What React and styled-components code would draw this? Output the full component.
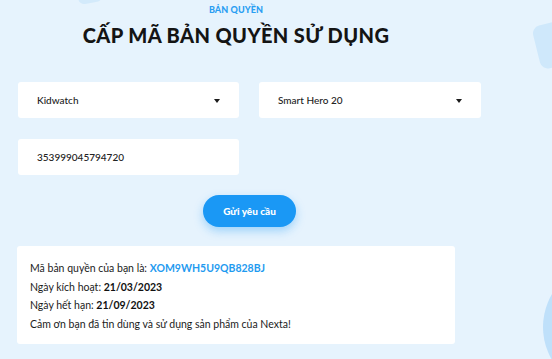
import React from "react";
import styled, { createGlobalStyle } from "styled-components";

const Global = createGlobalStyle`
  html, body { margin: 0; padding: 0; }
  body {
    background: #e6f3fd;
    font-family: "Lato", "Noto Sans", sans-serif;
    color: #1b1b1b;
    overflow: hidden;
  }
`;

const Page = styled.div`
  position: relative;
  width: 552px;
  height: 359px;
  overflow: hidden;
  background: #e6f3fd;
`;

const ShapeTopRight = styled.div`
  position: absolute;
  left: 536px;
  top: 22px;
  width: 40px;
  height: 44px;
  border-radius: 8px;
  background: #cfe8fb;
  transform: rotate(-14deg);
`;

const ShapeCircle = styled.div`
  position: absolute;
  left: 543px;
  top: 262px;
  width: 130px;
  height: 130px;
  border-radius: 50%;
  background: #bfe0fa;
`;

const ShapeTopLeft = styled.div`
  position: absolute;
  left: 78px;
  top: -10px;
  width: 24px;
  height: 13px;
  border-radius: 6px;
  background: #d3eafb;
  transform: rotate(-10deg);
`;

const Content = styled.div`
  position: relative;
  display: flex;
  flex-direction: column;
  padding-top: 4px;
`;

const Header = styled.header`
  width: 438px;
  margin-left: 17px;
  display: flex;
  flex-direction: column;
  align-items: center;
`;

const Eyebrow = styled.div`
  font-family: "Lato", sans-serif;
  font-weight: 900;
  font-size: 9px;
  letter-spacing: 0.1px;
  color: #2a9ef2;
  line-height: 11px;
`;

const Title = styled.h1`
  margin: 8px 0 0;
  font-family: "Lato", sans-serif;
  font-weight: 900;
  font-size: 20px;
  line-height: 24px;
  letter-spacing: 0.4px;
  color: #141414;
`;

const Form = styled.div`
  margin: 35px 0 0 18px;
  display: grid;
  grid-template-columns: 221px 222px;
  column-gap: 20px;
  row-gap: 21px;
`;

const Field = styled.div`
  height: 36px;
  background: #ffffff;
  border-radius: 3px;
  display: flex;
  align-items: center;
  justify-content: space-between;
  padding: 0 19px 0 19px;
  font-size: 10px;
  color: #222;
  font-family: "Lato", sans-serif;
  font-weight: 500;
`;

const Caret = styled.span`
  width: 0;
  height: 0;
  border-left: 3.5px solid transparent;
  border-right: 3.5px solid transparent;
  border-top: 4px solid #1b1b1b;
  margin-top: 1px;
`;

const ButtonRow = styled.div`
  display: flex;
  justify-content: center;
  width: 463px;
  margin: 20px 0 0 18px;
`;

const Button = styled.button`
  width: 93px;
  height: 32px;
  border: none;
  border-radius: 16px;
  background: #1a98f5;
  color: #fff;
  font-family: "Lato", sans-serif;
  font-weight: 900;
  font-size: 10px;
  box-shadow: 0 4px 10px rgba(26, 152, 245, 0.35);
  cursor: pointer;
`;

const Result = styled.div`
  margin: 19px 0 0 17px;
  width: 438px;
  height: 98px;
  box-sizing: border-box;
  background: #fff;
  border-radius: 3px;
  padding: 13px 13px;
  font-size: 10.5px;
  font-family: "Lato", sans-serif;
  color: #1b1b1b;
`;

const Line = styled.div`
  line-height: 18.5px;
`;

const Strong = styled.b`
  font-weight: 700;
  color: ${(p) => (p.$accent ? "#1f9bf0" : "#111")};
`;

export default function App() {
  return (
    <>
      <Global />
      <Page>
        <ShapeTopLeft />
        <ShapeTopRight />
        <ShapeCircle />
        <Content>
          <Header>
            <Eyebrow>BẢN QUYỀN</Eyebrow>
            <Title>CẤP MÃ BẢN QUYỀN SỬ DỤNG</Title>
          </Header>
          <Form>
            <Field>
              Kidwatch
              <Caret />
            </Field>
            <Field>
              Smart Hero 20
              <Caret />
            </Field>
            <Field>353999045794720</Field>
          </Form>
          <ButtonRow>
            <Button>Gửi yêu cầu</Button>
          </ButtonRow>
          <Result>
            <Line>
              Mã bản quyền của bạn là: <Strong $accent>XOM9WH5U9QB828BJ</Strong>
            </Line>
            <Line>
              Ngày kích hoạt: <Strong>21/03/2023</Strong>
            </Line>
            <Line>
              Ngày hết hạn: <Strong>21/09/2023</Strong>
            </Line>
            <Line>Cảm ơn bạn đã tin dùng và sử dụng sản phẩm của Nexta!</Line>
          </Result>
        </Content>
      </Page>
    </>
  );
}
